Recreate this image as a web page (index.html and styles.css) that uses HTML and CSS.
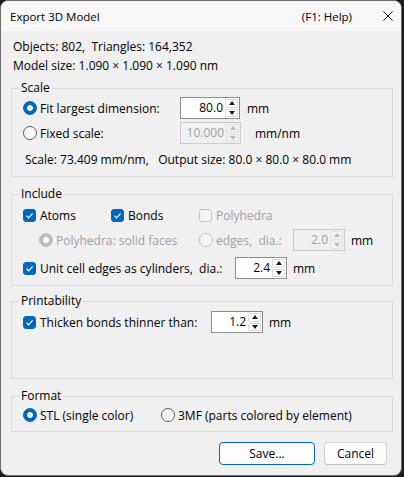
FILE: index.html
```html
<!DOCTYPE html>
<html lang="en">
<head>
    <meta charset="UTF-8">
    <title>Export 3D Model</title>
    <link rel="stylesheet" href="styles.css">
</head>
<body>
    <div class="window">
        <div class="titlebar">
            <span class="title">Export 3D Model</span>
            <span class="help">(F1: Help)</span>
            <svg class="close" width="10" height="10" viewBox="0 0 10 10">
                <path d="M0.5 0.5 L9.5 9.5 M9.5 0.5 L0.5 9.5" stroke="#1a1a1a" stroke-width="1" fill="none"/>
            </svg>
        </div>

        <div class="content">
            <div class="info">
                <div>Objects: 802,&nbsp; Triangles: 164,352</div>
                <div>Model size: 1.090 × 1.090 × 1.090 nm</div>
            </div>

            <fieldset class="group scale">
                <legend>Scale</legend>
                <div class="row">
                    <span class="radio on"></span>
                    <span class="lbl" style="width:140px">Fit largest dimension:</span>
                    <div class="spin" style="width:60px">
                        <span class="val">80.0</span>
                        <span class="arrows"><i class="up"></i><i class="down"></i></span>
                    </div>
                    <span class="unit">mm</span>
                </div>
                <div class="row gap3">
                    <span class="radio"></span>
                    <span class="lbl" style="width:140px">Fixed scale:</span>
                    <div class="spin disabled" style="width:61px">
                        <span class="val">10.000</span>
                        <span class="arrows"><i class="up"></i><i class="down"></i></span>
                    </div>
                    <span class="unit wide">mm/nm</span>
                </div>
                <div class="summary">Scale: 73.409 mm/nm,&nbsp;&nbsp; Output size: 80.0 × 80.0 × 80.0 mm</div>
            </fieldset>

            <fieldset class="group include">
                <legend>Include</legend>
                <div class="row">
                    <span class="item"><span class="check on"><svg width="11" height="11" viewBox="0 0 11 11"><path d="M2.5 5.8 L4.6 7.8 L8.6 3.4" stroke="#fff" stroke-width="1.2" fill="none"/></svg></span>Atoms</span>
                    <span class="item"><span class="check on"><svg width="11" height="11" viewBox="0 0 11 11"><path d="M2.5 5.8 L4.6 7.8 L8.6 3.4" stroke="#fff" stroke-width="1.2" fill="none"/></svg></span>Bonds</span>
                    <span class="item off"><span class="check disabled"></span>Polyhedra</span>
                </div>
                <div class="row gap3 indent">
                    <span class="item off" style="width:160px"><span class="radio on disabled"></span>Polyhedra: solid faces</span>
                    <span class="radio disabled"></span>
                    <span class="lbl off" style="width:77px">edges,&nbsp; dia.:</span>
                    <div class="spin disabled" style="width:52px">
                        <span class="val">2.0</span>
                        <span class="arrows"><i class="up"></i><i class="down"></i></span>
                    </div>
                    <span class="unit">mm</span>
                </div>
                <div class="row gap6">
                    <span class="check on"><svg width="11" height="11" viewBox="0 0 11 11"><path d="M2.5 5.8 L4.6 7.8 L8.6 3.4" stroke="#fff" stroke-width="1.2" fill="none"/></svg></span>
                    <span class="lbl" style="width:195px">Unit cell edges as cylinders,&nbsp; dia.:</span>
                    <div class="spin" style="width:52px">
                        <span class="val">2.4</span>
                        <span class="arrows"><i class="up"></i><i class="down"></i></span>
                    </div>
                    <span class="unit">mm</span>
                </div>
            </fieldset>

            <fieldset class="group print">
                <legend>Printability</legend>
                <div class="row">
                    <span class="check on"><svg width="11" height="11" viewBox="0 0 11 11"><path d="M2.5 5.8 L4.6 7.8 L8.6 3.4" stroke="#fff" stroke-width="1.2" fill="none"/></svg></span>
                    <span class="lbl" style="width:171px">Thicken bonds thinner than:</span>
                    <div class="spin" style="width:52px">
                        <span class="val">1.2</span>
                        <span class="arrows"><i class="up"></i><i class="down"></i></span>
                    </div>
                    <span class="unit">mm</span>
                </div>
            </fieldset>

            <fieldset class="group format">
                <legend>Format</legend>
                <div class="row">
                    <span class="item" style="width:138px"><span class="radio on"></span>STL (single color)</span>
                    <span class="item" style="width:auto"><span class="radio"></span>3MF (parts colored by element)</span>
                </div>
            </fieldset>

            <div class="buttons">
                <button class="btn default" id="saveBtn">Save...</button>
                <button class="btn" id="cancelBtn">Cancel</button>
            </div>
        </div>
    </div>
</body>
</html>
```

FILE: styles.css
```css
* {
    box-sizing: border-box;
}

body {
    margin: 0;
    background-color: #1c1c1e;
    font-family: "Open Sans", "Noto Sans", sans-serif;
    font-size: 12px;
    color: #000;
}

.window {
    width: 402px;
    height: 476px;
    background-color: #f0f0f0;
    border: 1px solid #6e6e6e;
    border-radius: 8px;
    overflow: hidden;
    display: flex;
    flex-direction: column;
}

/* title bar */
.titlebar {
    height: 30px;
    flex-shrink: 0;
    background-color: #f7f7f7;
    display: flex;
    align-items: center;
    padding-left: 9px;
    font-size: 11.5px;
}

.titlebar .title {
    flex-grow: 1;
}

.titlebar .help {
    margin-right: 31px;
}

.titlebar .close {
    margin-right: 8px;
}

.content {
    padding: 0 8px 0 10px;
}

.info {
    padding-top: 6px;
    line-height: 19px;
    padding-left: 2px;
}

/* group boxes */
.group {
    margin: 0;
    border: 1px solid #dcdcdc;
    padding: 1px 8px 7px 7px;
    min-width: 0;
}

.group legend {
    padding: 0 2px;
    line-height: 16px;
}

.scale {
    margin-top: 5px;
}

.include {
    margin-top: 9px;
    padding-top: 2px;
    padding-bottom: 6px;
}

.print {
    margin-top: 7px;
    padding-top: 2px;
    padding-bottom: 45px;
}

.format {
    margin-top: 9px;
    padding-top: 0;
    padding-bottom: 5px;
}

.row {
    display: flex;
    align-items: center;
    height: 22px;
    padding-left: 4px;
    white-space: nowrap;
}

.row.gap3 {
    margin-top: 3px;
}

.row.gap6 {
    margin-top: 6px;
}

.row.indent {
    padding-left: 20px;
}

.lbl {
    flex-shrink: 0;
}

.item {
    display: flex;
    align-items: center;
    width: 88px;
    flex-shrink: 0;
}

.off {
    color: #a2a2a2;
}

.summary {
    margin-top: 6px;
    line-height: 19px;
    padding-left: 6px;
}

.unit {
    margin-left: 6px;
}

.spin + .unit {
    margin-left: 7px;
}

.unit.wide {
    margin-left: 14px !important;
}

.group .row .spin[style*="52px"] + .unit {
    margin-left: 6px;
}

/* radio buttons */
.radio {
    width: 14px;
    height: 14px;
    flex-shrink: 0;
    border-radius: 50%;
    border: 1px solid #5c5c5c;
    background-color: #f9f9f9;
    margin-right: 3px;
}

.radio.on {
    border-color: #0067c0;
    background: radial-gradient(circle, #fff 2.6px, #0067c0 3.2px);
}

.radio.disabled {
    border-color: #c4c4c4;
    background: #f5f5f5;
}

.radio.on.disabled {
    border-color: #bdbdbd;
    background: radial-gradient(circle, #fff 2.6px, #bdbdbd 3.2px);
}

/* check boxes */
.check {
    width: 13px;
    height: 13px;
    flex-shrink: 0;
    border-radius: 3px;
    border: 1px solid #5c5c5c;
    background-color: #f9f9f9;
    margin-right: 4px;
    display: flex;
    align-items: center;
    justify-content: center;
}

.check.on {
    background-color: #0067c0;
    border-color: #0067c0;
}

.check.disabled {
    border-color: #c4c4c4;
    background-color: #f5f5f5;
}

/* spin boxes */
.spin {
    height: 22px;
    flex-shrink: 0;
    display: flex;
    border: 1px solid #8c8c8c;
    background-color: #fff;
    padding: 1px;
}

.spin .val {
    flex-grow: 1;
    text-align: right;
    line-height: 18px;
    padding-right: 1px;
    font-size: 12px;
}

.spin .arrows {
    width: 13px;
    display: flex;
    flex-direction: column;
    gap: 1px;
    margin-left: 1px;
}

.spin .arrows i {
    flex-grow: 1;
    border: 1px solid #dadada;
    border-radius: 1px;
    display: flex;
    align-items: center;
    justify-content: center;
}

.spin .arrows i::before {
    content: "";
    border-left: 3.5px solid transparent;
    border-right: 3.5px solid transparent;
}

.spin .arrows .up::before {
    border-bottom: 4px solid #1a1a1a;
}

.spin .arrows .down::before {
    border-top: 4px solid #1a1a1a;
}

.spin.disabled {
    background-color: #f0f0f0;
    border-color: #cccccc;
    color: #a2a2a2;
}

.spin.disabled .arrows i {
    border-color: #e2e2e2;
}

.spin.disabled .arrows .up::before {
    border-bottom-color: #bdbdbd;
}

.spin.disabled .arrows .down::before {
    border-top-color: #bdbdbd;
}

/* dialog buttons */
.buttons {
    display: flex;
    justify-content: flex-end;
    gap: 9px;
    margin-top: 10px;
    padding-right: 6px;
}

.btn {
    height: 23px;
    border: 1px solid #d0d0d0;
    border-bottom-color: #bcbcbc;
    border-radius: 4px;
    background-color: #fdfdfd;
    font-family: inherit;
    font-size: 12px;
    color: #000;
    width: 63px;
    padding: 0;
}

.btn.default {
    width: 96px;
    border-color: #0067c0;
}
```
